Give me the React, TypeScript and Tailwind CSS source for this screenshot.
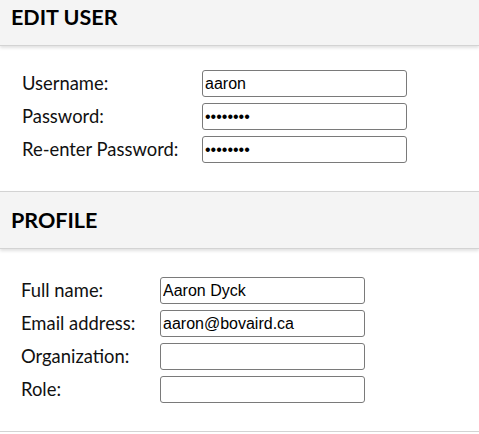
const account = [
  { label: 'Username:', type: 'text', value: 'aaron' },
  { label: 'Password:', type: 'password', value: 'password' },
  { label: 'Re-enter Password:', type: 'password', value: 'password' },
];

const profile = [
  { label: 'Full name:', type: 'text', value: 'Aaron Dyck' },
  { label: 'Email address:', type: 'text', value: 'aaron@bovaird.ca' },
  { label: 'Organization:', type: 'text', value: '' },
  { label: 'Role:', type: 'text', value: '' },
];

type Row = { label: string; type: string; value: string };

function SectionHeader({ title }: { title: string }) {
  return (
    <div className="relative flex h-[58px] items-center border-y border-[#d3d3d3] bg-[#f4f4f4] pl-[11px] shadow-[0_2px_3px_rgba(0,0,0,0.12)]">
      <h2 className="font-['Lato',sans-serif] text-[21.5px] font-bold text-black">{title}</h2>
    </div>
  );
}

function Fields({ rows, cols }: { rows: Row[]; cols: string }) {
  return (
    <div className={`grid ${cols} gap-y-[6px]`}>
      {rows.map((r) => (
        <label key={r.label} className="contents">
          <span className="flex h-[27px] items-center font-['Lato',sans-serif] text-[18.4px] leading-[27px] text-[#111]">
            {r.label}
          </span>
          <input
            type={r.type}
            defaultValue={r.value}
            className="h-[27px] rounded-[3px] border border-[#7a7a7a] bg-white px-[2px] font-['Liberation_Sans',Arial,sans-serif] text-[16px] text-black outline-none"
          />
        </label>
      ))}
    </div>
  );
}

export default function App() {
  return (
    <div className="min-h-[434px] overflow-hidden bg-white">
      <div className="-mt-[12px]">
        <SectionHeader title="EDIT USER" />
      </div>
      <div className="pt-[24px] pb-[28px] pl-[22px]">
        <Fields rows={account} cols="grid-cols-[180px_205px]" />
      </div>
      <SectionHeader title="PROFILE" />
      <div className="pt-[28px] pb-[28px] pl-[21px]">
        <Fields rows={profile} cols="grid-cols-[139px_205px]" />
      </div>
      <div className="border-t border-[#d3d3d3]" />
    </div>
  );
}
